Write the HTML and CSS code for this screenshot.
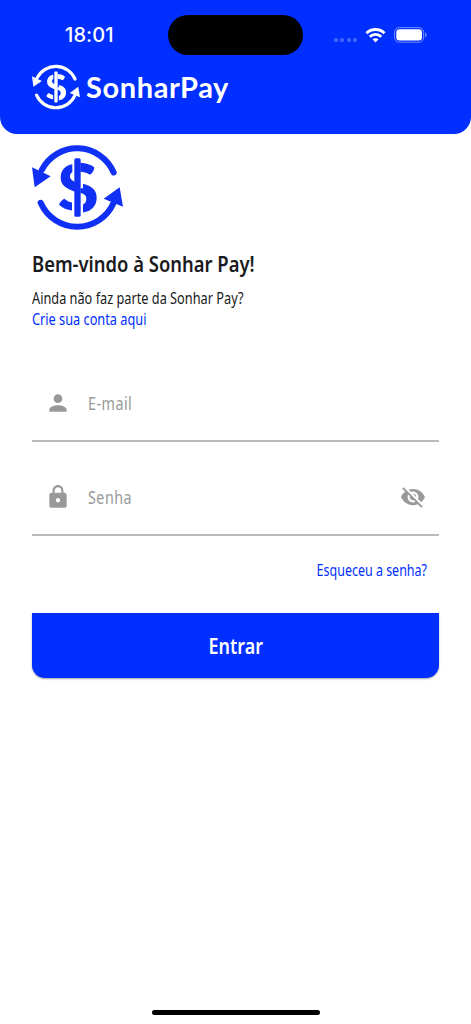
FILE: index.html
```
<!DOCTYPE html>
<html lang="pt-BR">
<head>
    <meta charset="UTF-8">
    <meta name="viewport" content="width=device-width, initial-scale=1.0">
    <link rel="stylesheet" href="styles.css">
    <title>Sonhar Pay</title>
</head>
<body>
    <!-- Logo symbol, used in the header and above the title -->
    <svg class="sprite" width="0" height="0">
        <symbol id="logo" viewBox="36 28 273 260">
            <g fill="none" stroke="currentColor" stroke-width="18" stroke-linecap="round">
                <path d="M65 106A120 122 0 0 1 281 113"/>
                <path d="M62 204A120 122 0 0 0 281 204"/>
            </g>
            <g fill="currentColor">
                <path d="M36 97L92 124L44 157Z"/>
                <path d="M299 157L309 216L251 192Z"/>
                <rect x="163" y="70" width="19" height="176" rx="5"/>
                <path d="M157 88C136 91 122 106 122 128C122 152 139 161 168 172V142C159 139 150 134 150 125C150 118 152 115 157 112Z"/>
                <path d="M181 84C198 85 214 90 223 98C222 107 218 114 210 120C202 115 192 112 181 111Z"/>
                <path d="M189 147C216 154 230 166 230 189C230 214 214 230 189 233V209C196 206 199 201 199 191C199 183 193 178 181 174V160H189Z"/>
                <path d="M117 210C120 202 126 196 133 192C140 198 147 202 156 203V227C141 225 128 221 117 210Z"/>
            </g>
        </symbol>
    </svg>

    <header class="header">
        <div class="status-bar">
            <span class="time">18:01</span>
            <div class="island"></div>
            <div class="status-icons">
                <div class="signal"><i></i><i></i><i></i><i></i></div>
                <svg class="wifi" viewBox="0 0 20 15" fill="none" stroke="#fff" stroke-width="2.9">
                    <path d="M1 5.3C6 .3 14 .3 19 5.3"/>
                    <path d="M4.3 8.7C7.6 5.6 12.4 5.6 15.7 8.7"/>
                    <path d="M7 11.3C8.8 9.8 11.2 9.8 13 11.3L10 14.6Z" fill="#fff" stroke="none"/>
                </svg>
                <svg class="battery" viewBox="0 0 33 16">
                    <rect x=".6" y=".6" width="29" height="14.6" rx="4.6" fill="none" stroke="#fff" stroke-opacity=".45"/>
                    <rect x="2.3" y="2.3" width="25.7" height="11.2" rx="3.2" fill="#fff"/>
                    <path d="M31.2 5.3C33 6 33 9.8 31.2 10.5Z" fill="#fff" fill-opacity=".5"/>
                </svg>
            </div>
        </div>
        <div class="brand">
            <svg class="brand-icon"><use href="#logo"/></svg>
            <span class="brand-name">SonharPay</span>
        </div>
    </header>

    <main class="content">
        <svg class="logo"><use href="#logo"/></svg>
        <h1 class="title">Bem-vindo à Sonhar Pay!</h1>
        <p class="subtitle">Ainda não faz parte da Sonhar Pay?</p>
        <a class="link signup" href="#">Crie sua conta aqui</a>

        <form class="login-form">
            <label class="field">
                <svg class="icon" viewBox="0 0 24 24"><path d="M12 12c2.21 0 4-1.79 4-4s-1.79-4-4-4-4 1.79-4 4 1.79 4 4 4zm0 2c-2.67 0-8 1.34-8 4v2h16v-2c0-2.66-5.33-4-8-4z"/></svg>
                <input type="email" placeholder="E-mail">
            </label>
            <label class="field">
                <svg class="icon" viewBox="0 0 24 24"><path d="M18 8h-1V6c0-2.76-2.24-5-5-5S7 3.24 7 6v2H6c-1.100 0-2 .9-2 2v10c0 1.100.9 2 2 2h12c1.100 0 2-.9 2-2V10c0-1.100-.9-2-2-2zm-6 9c-1.100 0-2-.9-2-2s.9-2 2-2 2 .9 2 2-.9 2-2 2zm3.100-9H8.900V6c0-1.710 1.390-3.100 3.100-3.100s3.100 1.390 3.100 3.100v2z"/></svg>
                <input type="password" placeholder="Senha">
                <svg class="icon" viewBox="0 0 24 24"><path d="M12 7c2.760 0 5 2.240 5 5 0 .65-.13 1.260-.36 1.830l2.920 2.920c1.510-1.260 2.700-2.890 3.430-4.750-1.730-4.390-6-7.500-11-7.500-1.400 0-2.740.25-3.980.7l2.160 2.160C10.740 7.130 11.350 7 12 7zM2 4.270l2.280 2.280.46.46C3.080 8.300 1.780 10.020 1 12c1.730 4.390 6 7.500 11 7.500 1.550 0 3.030-.3 4.380-.84l.42.42L19.730 22 21 20.730 3.270 3 2 4.270zM7.530 9.800l1.550 1.550c-.05.21-.08.43-.08.65 0 1.660 1.340 3 3 3 .22 0 .44-.03.65-.08l1.550 1.550c-.67.33-1.410.53-2.200.53-2.760 0-5-2.240-5-5 0-.79.2-1.530.53-2.200zm4.310-.78l3.150 3.150.02-.16c0-1.660-1.340-3-3-3l-.17.01z"/></svg>
            </label>
            <a class="link forgot" href="#">Esqueceu a senha?</a>
            <button type="button" class="submit"><span class="submit-label">Entrar</span></button>
        </form>
    </main>

    <div class="home-indicator"></div>
</body>
</html>
```
FILE: styles.css
```
* {
    box-sizing: border-box;
}

body {
    margin: 0;
    height: 1024px;
    display: flex;
    flex-direction: column;
    overflow: hidden;
    background: #fff;
    color: #1a1b20;
    font-family: "Noto Sans", "Open Sans", sans-serif;
}

.sprite {
    position: absolute;
}

/* Header */
.header {
    height: 134px;
    padding-top: 15px;
    background: #002fff;
    border-radius: 0 0 17px 17px;
    color: #fff;
}

.status-bar {
    display: grid;
    grid-template-columns: 168px 135px 1fr;
    height: 40px;
    align-items: center;
}

.time {
    padding-left: 65px;
    font: 500 20px/40px Inter, sans-serif;
    letter-spacing: 0.1px;
}

.island {
    height: 40px;
    border-radius: 20px;
    background: #000;
}

.status-icons {
    display: flex;
    align-items: center;
    padding-left: 31px;
}

.signal {
    display: flex;
    gap: 2.4px;
    margin: 10px 8px 0 0;
}

.signal i {
    width: 4px;
    height: 4px;
    border-radius: 1.5px;
    background: rgba(255, 255, 255, 0.25);
}

.wifi {
    width: 21px;
    height: 15px;
    margin-right: 8px;
}

.battery {
    width: 33px;
    height: 16px;
}

.brand {
    display: flex;
    align-items: center;
    padding: 9px 0 0 32px;
}

.brand-icon {
    width: 48px;
    height: 46px;
}

.brand-name {
    margin: 0 0 0 6px;
    font: 700 29px/46px Lato, sans-serif;
    letter-spacing: 0.6px;
}

/* Login */
.content {
    display: flex;
    flex-direction: column;
    align-items: flex-start;
    padding: 10px 32px 0;
}

.logo {
    width: 91px;
    height: 87px;
    color: #1030f5;
}

/* Condensed look for the texts */
.title,
.subtitle,
.signup,
.field input {
    transform: scaleX(0.817);
    transform-origin: left;
}

.title {
    margin: 17px 0 0;
    font-size: 21.6px;
    line-height: 32px;
    font-weight: 600;
    transform: scaleX(0.853);
}

.subtitle {
    margin: 7px 0 0;
    font-size: 15.6px;
    line-height: 22px;
}

.link {
    color: #002fff;
    font-size: 15.6px;
    line-height: 21px;
    text-decoration: none;
}

.login-form {
    width: 100%;
    display: flex;
    flex-direction: column;
    margin-top: 35px;
}

.field {
    display: flex;
    align-items: center;
    height: 77px;
    padding: 0 13px;
    border-bottom: 2px solid #bbb;
}

.field + .field {
    margin-top: 17px;
}

.icon {
    width: 26px;
    height: 26px;
    flex: none;
    fill: #999;
}

.field input {
    flex: 1;
    min-width: 0;
    padding: 0;
    margin-left: 17px;
    border: 0;
    outline: none;
    background: none;
    font: inherit;
    font-size: 17.5px;
    letter-spacing: 0.6px;
}

.field input::placeholder {
    color: #999;
    opacity: 1;
}

.forgot {
    align-self: flex-end;
    margin: 24px 12.5px 0 0;
    transform: scaleX(0.8);
    transform-origin: right;
}

.submit {
    height: 65px;
    margin-top: 32px;
    padding: 0 0 1px;
    border: 0;
    border-radius: 0 0 13px 13px;
    background: #002fff;
    box-shadow: 0 1px 2px rgba(0, 0, 0, 0.35);
    color: #fff;
    font: inherit;
    font-size: 21.6px;
    font-weight: 600;
}

.submit-label {
    display: inline-block;
    transform: scaleX(0.83);
}

.home-indicator {
    width: 168px;
    height: 5px;
    margin: auto auto 9px;
    border-radius: 3px;
    background: #000;
}
```
